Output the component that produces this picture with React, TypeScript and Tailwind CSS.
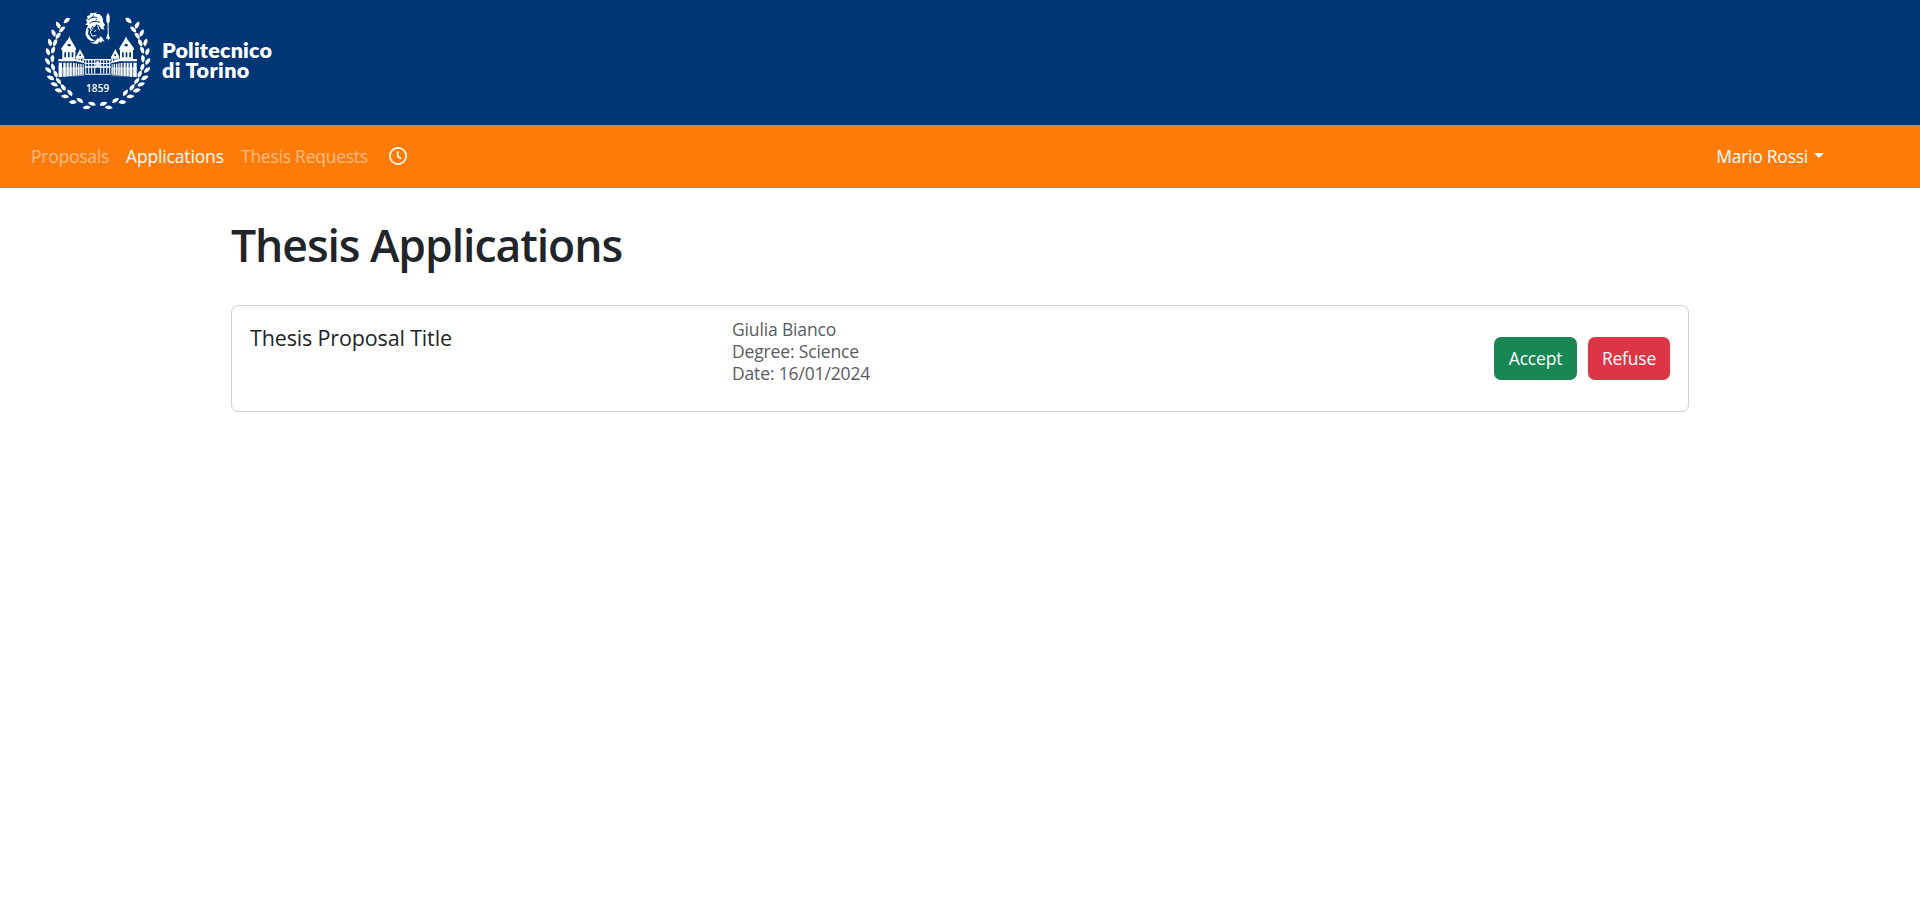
import React from "react";

const LEAVES: [number, number, number][] = [
  [110, 61, -32], [85, 75, 68], [96, 88, -38], [71, 99, 75], [84, 107, -45],
  [60, 127, 80], [75, 128, -58], [54, 155, 78], [69, 150, -62], [53, 184, 65],
  [67, 176, -78], [55, 210, 48], [69, 201, 82], [62, 233, 35], [77, 222, 75],
  [73, 253, 28], [86, 243, 62], [86, 271, 22], [100, 262, 62], [105, 289, 15],
  [120, 278, 62], [129, 306, 8], [150, 301, 42], [170, 322, 3], [186, 311, 25],
];

function Wreath() {
  return (
    <>
      {LEAVES.map(([x, y, r]) => (
        <path key={`${x}-${y}`} d="M-12 2Q-7-6 3-6Q9-5 12 0Q7 6-2 6Q-8 6-12 2Z" transform={`translate(${x} ${y}) rotate(${r})`} />
      ))}
    </>
  );
}

function Wing() {
  return (
    <>
      <path d="M118 109L121 116L138 145V150H94V145L115 116Z" />
      <path d="M97 153H103V173H97ZM108 153H114V173H108ZM119 153H125V173H119ZM130 153H136V173H130Z" />
      <path d="M97 150H136V157H97ZM97 172H136V180H97Z" />
      <path d="M85 177H138L164 186V190L138 184H85Z" />
      <path d="M150 147L153 154L163 171V176H138V170L146 155Z" />
      <path d="M141 177H146V184H141ZM149 177H153V186H149ZM157 177H161V187H157Z" />
      <path d="M86 188H96V230L86 232ZM100 188H107V230H100ZM110 188H116V229H110ZM119 188H125V228H119ZM129 189H134V227H129ZM137 190H141V226H137ZM144 191H148V225H144ZM151 192H155V224H151ZM158 193H161V223H158Z" />
      <path d="M86 203H162V206H86Z" />
      <path d="M86 206H162V228L86 231Z" opacity=".45" />
      <path d="M162 177H203V181H162ZM164 189H203V192H164ZM164 199H203V203H164ZM164 221H203V224H164Z" />
      <path d="M165 180H169V221H165ZM174 180H178V221H174ZM183 180H187V221H183ZM192 180H196V221H192Z" opacity=".8" />
      <path d="M113 132H122V139H113ZM148 163H153V168H148Z" fill="#003576" />
    </>
  );
}

function Emblem() {
  return (
    <svg viewBox="0 0 390 372" className="h-[124px] w-[130px] shrink-0" fill="#fff">
      <Wreath />
      <g transform="translate(406 0) scale(-1 1)"><Wreath /></g>
      <Wing />
      <g transform="translate(406 0) scale(-1 1)"><Wing /></g>
      <path d="M196 188L203 181L210 188V200H196Z" opacity=".85" />
      <path d="M167 60L173 57L171 48L179 46L182 38L192 40L200 36L198 42L208 42L215 49L219 58L219 65L225 75L220 82L224 89L214 87L208 77L199 73L194 82L187 78L181 91L178 83L170 88L174 75L166 75L172 66Z" />
      <path d="M174 61Q183 49 201 52M179 70Q190 60 210 67M185 53L192 46M197 61L201 56" fill="none" stroke="#003576" strokeWidth="3" />
      <path d="M169 84L176 90L174 102L183 115L195 122L184 124L173 116L166 103Z" />
      <path d="M190 82L181 96L186 108L199 107M203 77L208 91M192 95L199 90" fill="none" stroke="#fff" strokeWidth="3" />
      <path d="M179 128Q195 130 203 113L207 117L210 109L216 112L224 126L216 122L214 130L208 124L203 132L193 131Z" />
      <path d="M234 38L239 49V65L236 71V101L240 118L236 116L235 123L232 115L228 118L233 100V71L229 64V48Z" />
      <text x="203" y="275" textAnchor="middle" fontFamily="Open Sans, sans-serif" fontSize="30" fontWeight="600" letterSpacing="0.5">1859</text>
    </svg>
  );
}

function ClockIcon() {
  return (
    <svg viewBox="0 0 16 16" className="mb-[2px] size-[18px]" fill="none" stroke="#fff" strokeWidth="1.500" strokeLinecap="round" strokeLinejoin="round">
      <circle cx="8" cy="8" r="7.250" />
      <path d="M7.800 4.200V8.400L10.200 10" />
    </svg>
  );
}

export default function App() {
  return (
    <div className="min-h-[904px] bg-white font-['Open_Sans',sans-serif] text-[17.5px] text-[#212529]">
      <header className="flex h-[125px] items-start bg-[#003576] pl-[30px]">
        <Emblem />
        <p className="mt-[40px] ml-[2px] font-['Lato',sans-serif] text-[21.5px] leading-[20px] font-extrabold tracking-[0.2px] text-white">
          Politecnico
          <br />
          <span className="tracking-[0.4px]">di Torino</span>
        </p>
      </header>
      <nav className="flex h-[63px] items-center bg-[#fd7b09] pl-[31px] tracking-[-0.25px] text-white">
        <a className="w-[95px] whitespace-nowrap text-white/50">Proposals</a>
        <a className="w-[115px] whitespace-nowrap tracking-[-0.15px]">Applications</a>
        <a className="w-[148px] whitespace-nowrap text-white/50">Thesis Requests</a>
        <ClockIcon />
        <a className="mr-[96px] ml-auto flex items-center gap-[6px]">
          Mario Rossi
          <span className="mb-[3px] border-x-[5px] border-t-[5px] border-x-transparent border-t-white" />
        </a>
      </nav>
      <main className="mx-[231px] pt-[27px]">
        <h1 className="h-[90px] text-[44.5px] leading-[60px] font-[550] tracking-[-1.05px]">Thesis Applications</h1>
        <section className="flex h-[107px] rounded-[7px] border border-[#d0d0d1] pr-[18px] pl-[18px]">
          <h2 className="w-[482px] pt-[17px] text-[21.5px] leading-[30px] tracking-[-0.15px]">Thesis Proposal Title</h2>
          <div className="pt-[12px] leading-[22px] tracking-[-0.15px] text-[#595c5f]">
            <p>Giulia Bianco</p>
            <p>Degree: Science</p>
            <p>Date: 16/01/2024</p>
          </div>
          <div className="ml-auto flex items-center gap-[11px] tracking-[-0.2px] text-white">
            <button className="h-[43px] w-[83px] rounded-[7px] bg-[#198754]">Accept</button>
            <button className="h-[43px] w-[82px] rounded-[7px] bg-[#dc3545]">Refuse</button>
          </div>
        </section>
      </main>
    </div>
  );
}
